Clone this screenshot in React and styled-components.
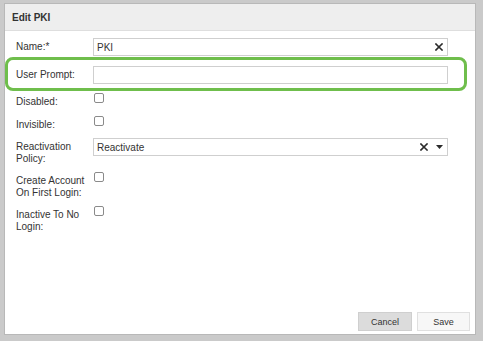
import React from "react";
import styled, { createGlobalStyle } from "styled-components";

const GlobalStyle = createGlobalStyle`
  html, body {
    margin: 0;
    padding: 0;
    background: #cacaca;
  }
  body {
    font-family: "Liberation Sans", Arial, sans-serif;
    color: #333;
  }
`;

const Page = styled.div`
  width: 483px;
  height: 341px;
  box-sizing: border-box;
  padding: 3px 7px 6px 4px;
  display: flex;
`;

const Dialog = styled.div`
  flex: 1;
  display: flex;
  flex-direction: column;
  background: #fff;
  border: 1px solid #b8b8b8;
`;

const Header = styled.div`
  height: 26px;
  display: flex;
  align-items: center;
  padding-left: 7px;
  background: #eeeeee;
  border-bottom: 1px solid #dedede;
  font-size: 10px;
  font-weight: bold;
  color: #333;
`;

const Body = styled.div`
  flex: 1;
  display: flex;
  flex-direction: column;
  gap: 8px;
  padding: 7px 27px 0 11px;
`;

const Row = styled.div`
  display: flex;
  align-items: flex-start;
`;

const Label = styled.div`
  width: 77px;
  flex-shrink: 0;
  padding-top: 3px;
  font-size: 10px;
  line-height: 11.5px;
  color: #333;
`;

const Highlight = styled.div`
  margin: -7px -19px -6px -11px;
  padding: 6px 16px 4px 8px;
  border: 3px solid #6fbe4c;
  border-radius: 8px;
`;

const Field = styled.div`
  flex: 1;
  height: 18px;
  box-sizing: border-box;
  display: flex;
  align-items: center;
  gap: 8px;
  padding: 0 4px 0 3px;
  border: 1px solid #cfcfcf;
  font-size: 10px;
  color: #333;
`;

const Value = styled.span`
  flex: 1;
`;

const Check = styled.div`
  width: 10px;
  height: 10px;
  box-sizing: border-box;
  margin-left: 1px;
  border: 1px solid #8a8a8a;
  border-radius: 2px;
  background: #fff;
`;

const Footer = styled.div`
  display: flex;
  justify-content: flex-end;
  gap: 5px;
  padding: 0 5px 3px 0;
`;

const Button = styled.button`
  width: ${({ $w }) => $w}px;
  height: 19px;
  box-sizing: border-box;
  border: 1px solid ${({ $primary }) => ($primary ? "#cfcfcf" : "#e0e0e0")};
  background: ${({ $primary }) => ($primary ? "#dcdcdc" : "#f7f7f7")};
  font-family: "Liberation Sans", Arial, sans-serif;
  font-size: 9px;
  color: #333;
  padding: 0;
`;

const ClearIcon = () => (
  <svg width="8" height="8" viewBox="0 0 8 8">
    <path d="M1 1L7 7M7 1L1 7" stroke="#2b2b2b" strokeWidth="1.6" strokeLinecap="square" />
  </svg>
);

const Caret = () => (
  <svg width="7" height="4" viewBox="0 0 7 4">
    <path d="M0 0H7L3.5 4Z" fill="#2b2b2b" />
  </svg>
);

export default function App() {
  return (
    <>
      <GlobalStyle />
      <Page>
        <Dialog>
          <Header>Edit PKI</Header>
          <Body>
            <Row>
              <Label>Name:*</Label>
              <Field>
                <Value>PKI</Value>
                <ClearIcon />
              </Field>
            </Row>
            <Highlight>
              <Row>
                <Label>User Prompt:</Label>
                <Field />
              </Row>
            </Highlight>
            <Row>
              <Label>Disabled:</Label>
              <Check />
            </Row>
            <Row>
              <Label>Invisible:</Label>
              <Check />
            </Row>
            <Row>
              <Label>
                Reactivation
                <br />
                Policy:
              </Label>
              <Field>
                <Value>Reactivate</Value>
                <ClearIcon />
                <Caret />
              </Field>
            </Row>
            <Row>
              <Label>
                Create Account
                <br />
                On First Login:
              </Label>
              <Check />
            </Row>
            <Row>
              <Label>
                Inactive To No
                <br />
                Login:
              </Label>
              <Check />
            </Row>
          </Body>
          <Footer>
            <Button $w={54} $primary>Cancel</Button>
            <Button $w={53}>Save</Button>
          </Footer>
        </Dialog>
      </Page>
    </>
  );
}
